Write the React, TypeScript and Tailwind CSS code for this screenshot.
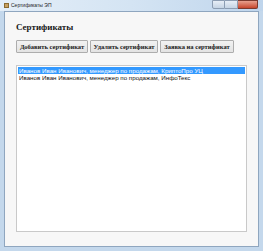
import React from 'react';

const serif = { fontFamily: '"Liberation Serif", "DejaVu Serif", serif' };

// Window chrome: title bar + caption buttons
const TitleBar: React.FC = () => (
  <div className="h-[11px] flex items-start justify-between bg-gradient-to-r from-[#e4eef8] via-[#d4e4f3] to-[#bfd5ec]">
    <div className="flex items-center gap-[2px] pl-[4px] pt-[2px]">
      <div className="w-[5px] h-[5px] bg-[#c8a060] border border-[#8a6a30]" />
      <span className="text-[5px] leading-[6px] text-[#1e1e1e] font-['Liberation_Sans',sans-serif]">
        Сертификаты ЭП
      </span>
    </div>
    <div className="flex mr-[5px]">
      <div className="w-[13px] h-[9px] bg-gradient-to-b from-[#e7eef6] to-[#c5d4e4] border border-[#8c9db2] rounded-bl-[2px]" />
      <div className="w-[13px] h-[9px] bg-gradient-to-b from-[#e7eef6] to-[#c5d4e4] border-y border-r border-[#8c9db2]" />
      <div className="w-[20px] h-[9px] bg-gradient-to-b from-[#e8a08e] to-[#c6452c] border-y border-r border-[#7c3a2e] rounded-br-[2px]" />
    </div>
  </div>
);

const Button: React.FC<{ label: string; w: string }> = ({ label, w }) => (
  <div
    className={`${w} h-[13px] flex items-center justify-center border border-[#adadad] bg-gradient-to-b from-[#f2f2f2] to-[#e3e3e3] rounded-[1px] text-[6.5px] font-bold text-[#1a1a1a]`}
    style={serif}
  >
    {label}
  </div>
);

const rows = [
  'Иванов Иван Иванович, менеджер по продажам, КриптоПро УЦ',
  'Иванов Иван Иванович, менеджер по продажам, ИнфоТекс',
];

export default function App() {
  return (
    <div className="w-[263px] h-[251px] bg-[#c4d8ec] flex flex-col overflow-hidden">
      <TitleBar />
      <div className="flex-1 mx-[4px] mb-[4px] bg-[#f7f7f7] border border-[#8fa6bf] flex flex-col pl-[11px] pr-[11px]">
        <div className="pt-[9px] h-[28px] text-[9px] font-bold text-[#1a1a1a]" style={serif}>
          Сертификаты
        </div>
        <div className="flex gap-[2px]">
          <Button label="Добавить сертификат" w="w-[72px]" />
          <Button label="Удалить сертификат" w="w-[68px]" />
          <Button label="Заявка на сертификат" w="w-[74px]" />
        </div>
        <div className="mt-[12px] h-[167px] bg-white border border-[#c9c9c9] pt-[1px] pl-[1px] pr-[1px] font-['Liberation_Sans',sans-serif]">
          {rows.map((r, i) => (
            <div
              key={i}
              className={`h-[7px] leading-[7px] text-[6.2px] pl-[1px] whitespace-nowrap ${
                i === 0 ? 'bg-[#3399ff] text-white' : 'text-[#111]'
              }`}
            >
              {r}
            </div>
          ))}
        </div>
      </div>
    </div>
  );
}
